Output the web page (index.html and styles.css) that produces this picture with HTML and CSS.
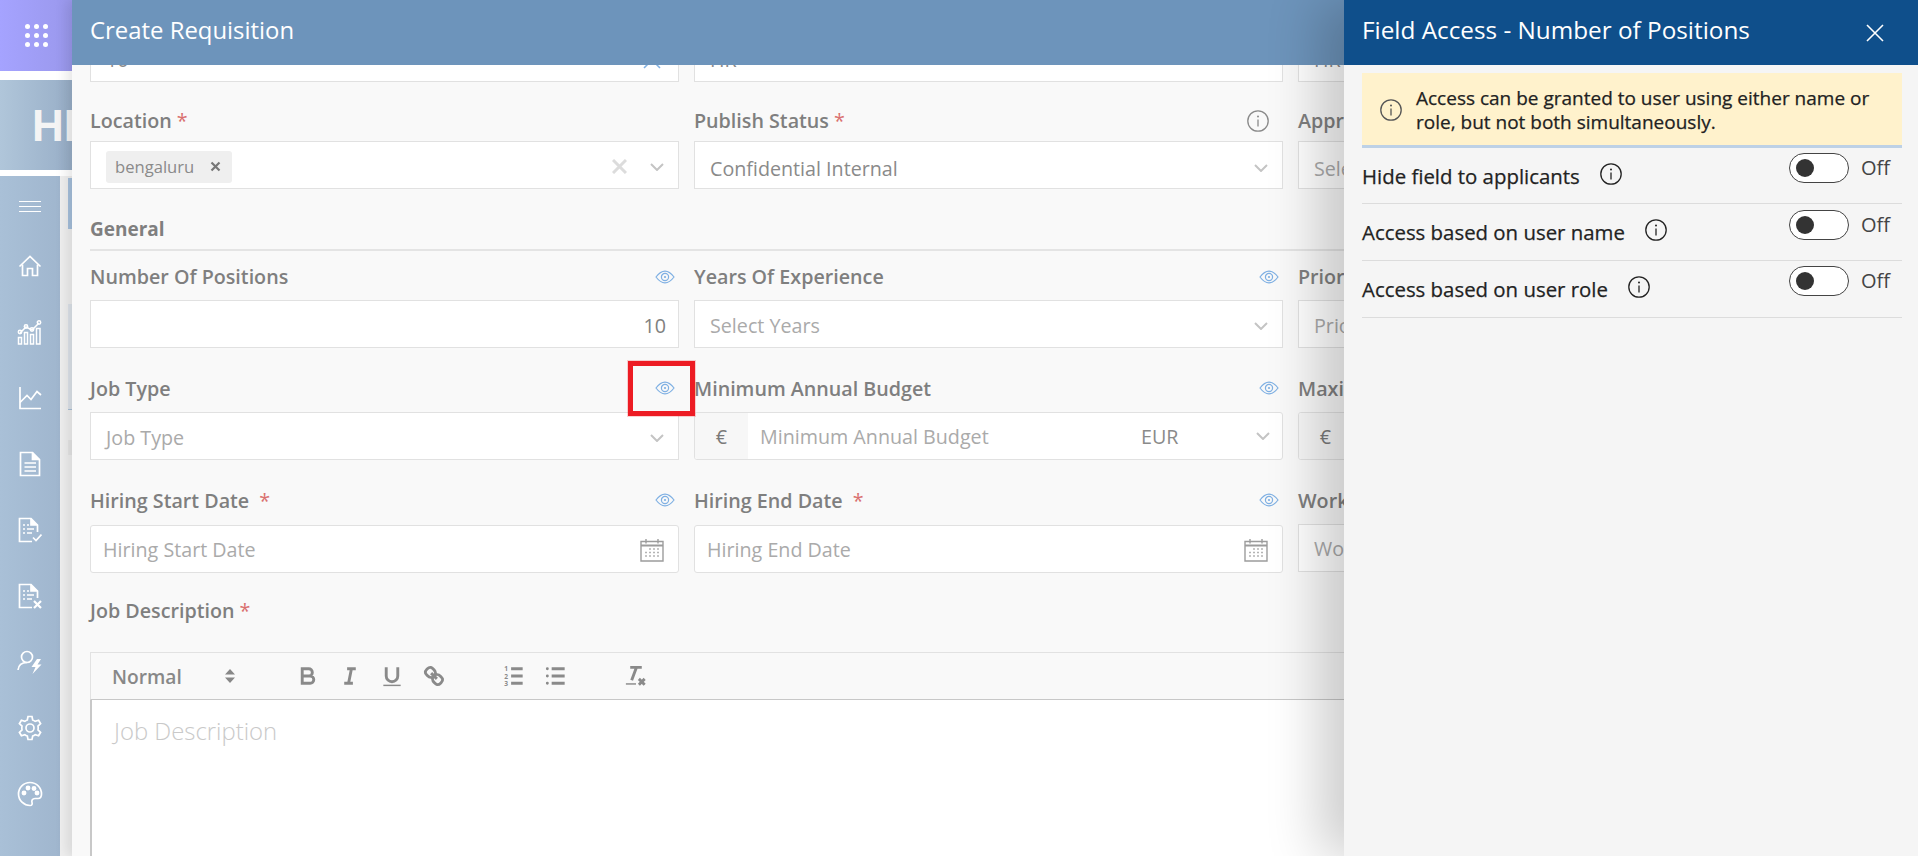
FILE: index.html
```html
<!DOCTYPE html>
<html lang="en">
<head>
<meta charset="utf-8">
<title>Create Requisition</title>
<link rel="stylesheet" href="styles.css">
</head>
<body>
<svg class="defs" width="0" height="0" aria-hidden="true">
  <symbol id="i-eye" viewBox="0 0 20 14"><path d="M1 7C4 3 7 1.2 10 1.2S16 3 19 7C16 11 13 12.8 10 12.8S4 11 1 7Z" fill="none" stroke="currentColor" stroke-width="1.2"/><circle cx="10" cy="7" r="3.6" fill="none" stroke="currentColor" stroke-width="1.2"/><circle cx="10" cy="7" r="1.1" fill="currentColor"/></symbol>
  <symbol id="i-chev" viewBox="0 0 14 8"><path d="M1 1L7 7L13 1" fill="none" stroke="currentColor" stroke-width="2"/></symbol>
  <symbol id="i-info" viewBox="0 0 22 22"><circle cx="11" cy="11" r="10.2" fill="none" stroke="currentColor" stroke-width="1.3"/><circle cx="11" cy="6.6" r="1" fill="currentColor"/><path d="M11 9.5V16.5" stroke="currentColor" stroke-width="1.3"/></symbol>
  <symbol id="i-cal" viewBox="0 0 24 24"><path d="M1 3.5H23V23H1Z" fill="none" stroke="currentColor" stroke-width="1.4"/><path d="M1 7.5H23" stroke="currentColor" stroke-width="2"/><path d="M6 1V5.5M18 1V5.5" stroke="currentColor" stroke-width="1.4"/><path d="M9 11H11M13 11H15M17 11H19M5 14.5H7M9 14.5H11M13 14.5H15M17 14.5H19M5 18H7M9 18H11M13 18H15M17 18H19" stroke="currentColor" stroke-width="1.6" opacity=".75"/></symbol>
</svg>

<div class="app">
  <aside class="rail">
    <div class="launcher"><div class="dots"><i></i><i></i><i></i><i></i><i></i><i></i><i></i><i></i><i></i></div></div>
    <div class="logo">HI</div>
    <div class="rail-body">
      <nav class="side-nav">
        <div class="nav-item nav-burger"><svg width="24" height="14" viewBox="0 0 24 14"><path d="M1 1.5H23M1 6.5H23M1 11.5H23" stroke="#fff" stroke-width="1"/></svg></div>
        <div class="nav-item"><svg width="24" height="24" viewBox="0 0 24 24" fill="none" stroke="#fff" stroke-width="1.7"><path d="M1.5 12.5L12 2.5L22.5 12.5"/><path d="M4.5 10.5V21.5H9.5V14.5H14.5V21.5H19.5V10.5"/></svg></div>
        <div class="nav-item"><svg width="26" height="26" viewBox="0 0 26 26" fill="none" stroke="#fff" stroke-width="1.5"><path d="M3 14L9 8L15 11L22 4"/><circle cx="3" cy="13" r="1.7"/><circle cx="9" cy="7.5" r="1.7"/><circle cx="15" cy="10.5" r="1.7"/><circle cx="22" cy="3.5" r="1.7"/><path d="M1.5 18.5H4.5V25H1.5ZM7.5 13.5H10.5V25H7.5ZM13.5 15.5H16.5V25H13.5ZM19.5 9.5H23V25H19.5Z"/></svg></div>
        <div class="nav-item"><svg width="24" height="24" viewBox="0 0 24 24" fill="none" stroke="#fff" stroke-width="1.7"><path d="M2 1V22.5H23"/><path d="M2 16.5L9 9.5L13 13.5L19 5.5L23 9"/></svg></div>
        <div class="nav-item"><svg width="22" height="26" viewBox="0 0 22 26" fill="none" stroke="#fff" stroke-width="1.7"><path d="M1.5 1.5H13.5L20.5 8.5V24.5H1.5Z"/><path d="M13.5 1.5V8.5H20.5" fill="#fff"/><path d="M5.5 12H17M5.5 16H17M5.5 20H17"/></svg></div>
        <div class="nav-item"><svg width="24" height="26" viewBox="0 0 24 26" fill="none" stroke="#fff" stroke-width="1.7"><path d="M14 24.5H1.5V1.5H13L19.5 8V15"/><path d="M13 1.5V8H19.5" fill="#fff"/><path d="M5 8H7M9 8H11M5 12H7M9 12H16M5 16H7M9 16H14"/><path d="M15 20.5L18 23.5L23.5 17.5"/></svg></div>
        <div class="nav-item"><svg width="24" height="26" viewBox="0 0 24 26" fill="none" stroke="#fff" stroke-width="1.7"><path d="M14 24.5H1.5V1.5H13L19.5 8V15"/><path d="M13 1.5V8H19.5" fill="#fff"/><path d="M5 8H7M9 8H11M5 12H7M9 12H16M5 16H7M9 16H14"/><path d="M16 18L23 25M23 18L16 25" stroke-width="2.2"/></svg></div>
        <div class="nav-item"><svg width="26" height="24" viewBox="0 0 26 24" fill="none" stroke="#fff" stroke-width="1.7"><circle cx="10" cy="7" r="5.5"/><path d="M1 20C1.5 15 5 12.5 10 12.5"/><path d="M20 9L14.5 17H18.5L15.5 24L24.5 14.5H20.5L24 9Z" fill="#fff" stroke="none"/></svg></div>
        <div class="nav-item"><svg width="26" height="26" viewBox="0 0 26 26" fill="none" stroke="#fff" stroke-width="1.7"><circle cx="13" cy="13" r="4"/><path d="M11 1.5H15L15.7 5A8.5 8.5 0 0 1 18.2 6.4L21.6 5.3L23.6 8.7L21 11.1A8.5 8.5 0 0 1 21 14.9L23.6 17.3L21.6 20.7L18.2 19.6A8.5 8.5 0 0 1 15.7 21L15 24.5H11L10.3 21A8.5 8.5 0 0 1 7.8 19.6L4.4 20.7L2.4 17.3L5 14.9A8.5 8.5 0 0 1 5 11.1L2.4 8.7L4.4 5.3L7.8 6.4A8.5 8.5 0 0 1 10.3 5Z"/></svg></div>
        <div class="nav-item"><svg width="26" height="26" viewBox="0 0 26 26" fill="none" stroke="#fff" stroke-width="1.7"><path d="M13 1.5C6.5 1.5 1.5 6.5 1.5 13C1.5 19.5 7 24.5 13 24.5C15 24.5 15.5 23 15 21.5C14.3 19.3 15.5 17.5 18 17.5H21C23.5 17.5 24.5 15.5 24.5 13C24.5 6.5 19.5 1.5 13 1.5Z"/><circle cx="7" cy="12" r="1.6" fill="#fff"/><circle cx="11" cy="7" r="1.6" fill="#fff"/><circle cx="17" cy="7.5" r="1.6" fill="#fff"/><circle cx="20" cy="12" r="1.6" fill="#fff"/></svg></div>
      </nav>
      <div class="rail-gutter">
        <span class="stub stub-active"></span>
        <span class="stub stub-pale"></span>
        <span class="stub stub-gray"></span>
      </div>
    </div>
  </aside>

  <section class="drawer">
    <header class="drawer-head">Create Requisition</header>
    <div class="drawer-body">
      <div class="form-row row-clipped">
        <div class="input input-value">10<svg class="clear-blue" width="18" height="18" viewBox="0 0 18 18"><path d="M1 1L17 17M17 1L1 17" stroke="#7fb0e3" stroke-width="1.6"/></svg></div>
        <div class="input input-value">HR</div>
        <div class="input input-value">HR</div>
      </div>

      <div class="form-row row-location">
        <div class="field">
          <div class="field-label"><span>Location <em class="req">*</em></span></div>
          <div class="input">
            <span class="tag">bengaluru<svg width="11" height="11" viewBox="0 0 11 11"><path d="M1.5 1.5L9.5 9.5M9.5 1.5L1.5 9.5" stroke="#777" stroke-width="2.2"/></svg></span>
            <svg class="clear-x" width="15" height="15" viewBox="0 0 15 15"><path d="M1 1L14 14M14 1L1 14" stroke="#dcdcdc" stroke-width="3"/></svg>
            <svg class="chev chev-near" width="14" height="8"><use href="#i-chev"/></svg>
          </div>
        </div>
        <div class="field">
          <div class="field-label"><span>Publish Status <em class="req">*</em></span><svg class="status-info" width="22" height="22"><use href="#i-info"/></svg></div>
          <div class="input input-value input-low">Confidential Internal<svg class="chev" width="14" height="8"><use href="#i-chev"/></svg></div>
        </div>
        <div class="field">
          <div class="field-label"><span>Approver</span></div>
          <div class="input input-ph">Select Approver</div>
        </div>
      </div>

      <h2 class="section-title">General</h2>

      <div class="form-row row-general">
        <div class="field">
          <div class="field-label"><span>Number Of Positions</span><svg class="eye" width="20" height="14"><use href="#i-eye"/></svg></div>
          <div class="input input-number">10</div>
        </div>
        <div class="field">
          <div class="field-label"><span>Years Of Experience</span><svg class="eye" width="20" height="14"><use href="#i-eye"/></svg></div>
          <div class="input input-ph">Select Years<svg class="chev" width="14" height="8"><use href="#i-chev"/></svg></div>
        </div>
        <div class="field">
          <div class="field-label"><span>Priority</span></div>
          <div class="input input-ph">Priority</div>
        </div>
      </div>

      <div class="form-row row-job">
        <div class="field">
          <div class="field-label"><span>Job Type</span><svg class="eye" width="20" height="14"><use href="#i-eye"/></svg></div>
          <div class="input input-ph">Job Type<svg class="chev" width="14" height="8"><use href="#i-chev"/></svg></div>
        </div>
        <div class="field">
          <div class="field-label"><span>Minimum Annual Budget</span><svg class="eye" width="20" height="14"><use href="#i-eye"/></svg></div>
          <div class="input input-budget input-round">
            <span class="addon">€</span>
            <span class="budget-ph">Minimum Annual Budget</span>
            <span class="currency">EUR<svg class="chev" width="14" height="8"><use href="#i-chev"/></svg></span>
          </div>
        </div>
        <div class="field">
          <div class="field-label"><span>Maximum Annual Budget</span></div>
          <div class="input input-budget input-round"><span class="addon">€</span></div>
        </div>
      </div>

      <div class="form-row row-dates">
        <div class="field">
          <div class="field-label"><span>Hiring Start Date <em class="req req-far">*</em></span><svg class="eye" width="20" height="14"><use href="#i-eye"/></svg></div>
          <div class="input input-ph input-date input-round">Hiring Start Date<svg class="cal" width="24" height="24"><use href="#i-cal"/></svg></div>
        </div>
        <div class="field">
          <div class="field-label"><span>Hiring End Date <em class="req req-far">*</em></span><svg class="eye" width="20" height="14"><use href="#i-eye"/></svg></div>
          <div class="input input-ph input-date input-round">Hiring End Date<svg class="cal" width="24" height="24"><use href="#i-cal"/></svg></div>
        </div>
        <div class="field">
          <div class="field-label"><span>Work Location</span></div>
          <div class="input input-ph input-high">Work Location</div>
        </div>
      </div>

      <div class="editor-block">
        <div class="field-label editor-label"><span>Job Description <em class="req">*</em></span></div>
        <div class="toolbar">
          <div class="picker">Normal<svg width="12" height="16" viewBox="0 0 12 16"><path d="M6 1L11 6.5H1ZM6 15L1 9.5H11Z" fill="#888"/></svg></div>
          <div class="tool-group">
            <svg class="tool" width="26" height="26" viewBox="0 0 18 18"><path d="M5 4H9.5A2.5 2.5 0 0 1 12 6.5A2.5 2.5 0 0 1 9.5 9H5ZM5 9H10.5A2.5 2.5 0 0 1 13 11.5A2.5 2.5 0 0 1 10.5 14H5Z"/></svg>
            <svg class="tool" width="26" height="26" viewBox="0 0 18 18"><path d="M7 4H13M5 14H11M8 14L10 4"/></svg>
            <svg class="tool" width="26" height="26" viewBox="0 0 18 18"><path d="M5 3V9A4 4 0 0 0 13 9V3"/><path d="M3 15.5H15" stroke-width="1"/></svg>
            <svg class="tool" width="26" height="26" viewBox="0 0 18 18"><path d="M7 7L11 11"/><path d="M8.9 4.577A3.476 3.476 0 0 1 9.26 9.256A3.476 3.476 0 0 1 4.577 8.9C3.185 7.5 2.035 6.4 4.217 4.217S7.5 3.185 8.9 4.577Z"/><path d="M13.423 9.1A3.476 3.476 0 0 0 8.744 8.74A3.476 3.476 0 0 0 9.104 13.419C10.496 14.811 11.604 15.961 13.783 13.779S14.815 10.5 13.423 9.1Z"/></svg>
          </div>
          <div class="tool-group">
            <svg class="tool" width="26" height="26" viewBox="0 0 18 18"><path d="M7 4H15M7 9H15M7 14H15"/><text x="2.2" y="5.8" class="tool-num">1</text><text x="2.2" y="10.8" class="tool-num">2</text><text x="2.2" y="15.8" class="tool-num">3</text></svg>
            <svg class="tool" width="26" height="26" viewBox="0 0 18 18"><path d="M6 4H15M6 9H15M6 14H15"/><path d="M3 4H3.01M3 9H3.01M3 14H3.01" stroke-linecap="round"/></svg>
          </div>
          <div class="tool-group">
            <svg class="tool" width="26" height="26" viewBox="0 0 18 18"><path d="M5 3H13M6 12L9.35 3"/><path d="M11 11L15 15M15 11L11 15"/><path d="M2 14.5H9" stroke-width="1"/></svg>
          </div>
        </div>
        <div class="editor-area">Job Description</div>
      </div>
    </div>
  </section>

  <aside class="panel">
    <header class="panel-head">
      <span>Field Access - Number of Positions</span>
      <svg width="18" height="18" viewBox="0 0 18 18"><path d="M1 1L17 17M17 1L1 17" stroke="#fff" stroke-width="1.6"/></svg>
    </header>
    <div class="panel-body">
      <div class="notice">
        <svg width="22" height="22"><use href="#i-info"/></svg>
        <p>Access can be granted to user using either name or role, but not both simultaneously.</p>
      </div>
      <div class="access-row">
        <span>Hide field to applicants</span><svg class="row-info" width="22" height="22"><use href="#i-info"/></svg>
        <div class="switch-wrap"><span class="switch"><i></i></span><span>Off</span></div>
      </div>
      <div class="access-row access-row-mid">
        <span>Access based on user name</span><svg class="row-info" width="22" height="22"><use href="#i-info"/></svg>
        <div class="switch-wrap"><span class="switch"><i></i></span><span>Off</span></div>
      </div>
      <div class="access-row">
        <span>Access based on user role</span><svg class="row-info" width="22" height="22"><use href="#i-info"/></svg>
        <div class="switch-wrap"><span class="switch"><i></i></span><span>Off</span></div>
      </div>
    </div>
  </aside>

  <div class="callout"></div>
</div>
</body>
</html>
```
FILE: styles.css
```css
* { box-sizing: border-box; }
html, body { margin: 0; height: 100%; overflow: hidden; background: #fff; }
body { font-family: "Open Sans", "Noto Sans", sans-serif; }
.defs { position: absolute; }

.app { position: relative; display: flex; width: 1918px; height: 856px; overflow: hidden; }

/* left rail */
.rail { flex: 0 0 72px; display: flex; flex-direction: column; overflow: hidden; }
.launcher { height: 71px; display: flex; align-items: center; justify-content: center; background: linear-gradient(90deg, #a5a3ff, #9a98ec); }
.dots { display: grid; grid-template-columns: repeat(3, 5px); gap: 4px; }
.dots i { width: 5px; height: 5px; border-radius: 50%; background: #fff; }
.logo { margin-top: 9px; height: 90px; padding-left: 32px; overflow: hidden; background: linear-gradient(90deg, #b0c6da, #98aec7); color: #f4f4f4; font-family: "Liberation Sans", sans-serif; font-size: 44px; font-weight: 700; line-height: 92px; white-space: nowrap; }
.rail-body { flex: 1; margin-top: 6px; display: flex; min-height: 0; }
.side-nav { flex: 0 0 60px; background: linear-gradient(90deg, #a9c0d7, #a0b6ce); display: flex; flex-direction: column; align-items: center; }
.nav-item { height: 66px; flex: none; display: flex; align-items: center; justify-content: center; }
.nav-burger { height: 57px; padding-top: 5px; }
.rail-gutter { flex: 1; background: #efefef; padding: 2px 0 0 8px; display: flex; flex-direction: column; }
.stub { display: block; }
.stub-active { height: 51px; background: #a6c0dc; }
.stub-pale { margin-top: 75px; height: 106px; background: #dde3ea; border-bottom: 1px solid #a8bfd6; }
.stub-gray { margin-top: 30px; height: 15px; background: #e6e6e6; }

/* main drawer */
.drawer { flex: 1; min-width: 0; display: flex; flex-direction: column; background: #f9f9f9; box-shadow: -5px 0 12px rgba(0, 0, 0, .1); position: relative; overflow: hidden; }
.drawer-head { position: relative; z-index: 2; flex: 0 0 65px; padding-left: 18px; background: #6d94bb; color: #fff; font-size: 23.9px; line-height: 60px; }
.drawer-body { flex: 1; min-height: 0; margin-top: -31px; display: flex; flex-direction: column; }

.form-row { display: grid; grid-template-columns: repeat(3, 589px); column-gap: 15px; padding-left: 18px; flex: none; }
.row-location { margin-top: 25px; }
.row-general { margin-top: 12px; }
.row-job { margin-top: 27px; }
.row-dates { margin-top: 27px; }

.field-label { display: flex; align-items: center; justify-content: space-between; height: 28px; padding-right: 4px; color: #7f7f7f; font-size: 19.7px; font-weight: 600; line-height: 28px; white-space: nowrap; }
.row-location .field-label { margin-bottom: 6px; }
.row-general .field-label, .row-job .field-label { margin-bottom: 9px; }
.row-dates .field-label { margin-bottom: 10px; }
.row-job .eye { margin-top: -2px; }
.row-dates .eye { margin-top: -2px; }
.req { color: #d9706f; font-style: normal; font-weight: 400; }
.req-far { margin-left: 5px; }
.status-info { color: #8a8a8a; margin-right: 10px; }
.eye { color: #7fb0e3; }

.input { display: flex; align-items: center; height: 48px; padding: 3px 14px 0 15px; background: #fff; border: 1px solid #e1e1e1; font-size: 19.7px; white-space: nowrap; overflow: hidden; }
.row-location .input-value, .row-location .input-ph { padding-top: 6px; }
.row-location .input:first-child { padding-top: 0; }
.row-dates .input { padding-top: 1px; }
.input-value { color: #8a8a8a; }
.input-ph { color: #aaa; }
.input-number { justify-content: flex-end; color: #808080; padding-right: 12px; }
.input-round { border-radius: 3px; }
.input-low { margin-top: 2px; }
.input-high { margin-top: -1px; }
.input-date { padding-left: 12px; }
.chev { margin-left: auto; color: #c4c4c4; flex: none; }
.cal { margin-left: auto; color: #9c9c9c; flex: none; }
.clear-blue { margin-left: auto; margin-right: 3px; }

.tag { display: flex; align-items: center; gap: 16px; height: 32px; padding: 0 11px 0 9px; border-radius: 3px; background: #efefef; color: #8a8a8a; font-size: 16.6px; }
.clear-x { margin-left: auto; }
.chev-near { margin-left: 23px; }

.input-budget { padding: 0 12px 0 0; }
.addon { flex: 0 0 53px; align-self: stretch; display: flex; align-items: center; justify-content: center; background: #f7f7f7; color: #7a7a7a; font-size: 19.7px; }
.budget-ph { flex: 1; padding-left: 12px; color: #aaa; }
.currency { flex: 0 0 129px; display: flex; align-items: center; color: #8a8a8a; font-size: 19.7px; }

.section-title { flex: none; margin: 26px 0 0 18px; padding-bottom: 6px; border-bottom: 2px solid #e4e4e4; color: #7f7f7f; font-size: 19px; font-weight: 700; line-height: 28px; }

/* editor */
.editor-block { flex: 1; min-height: 0; margin: 24px 0 0 18px; display: flex; flex-direction: column; }
.editor-label { margin-bottom: 27px; }
.toolbar { flex: 0 0 48px; display: flex; align-items: center; padding-left: 21px; background: #f9f9f9; border: 1px solid #e2e2e2; border-bottom-color: #c8c8c8; border-right: 0; }
.picker { flex: 0 0 124px; display: flex; align-items: center; justify-content: space-between; margin-right: 51px; color: #888; font-size: 19.2px; font-weight: 600; }
.tool-group { display: flex; margin-right: 38px; }
.tool { width: 42px; height: 26px; fill: none; stroke: #8a8a8a; stroke-width: 2; }
.tool-num { font-size: 4.6px; font-weight: 700; fill: #8a8a8a; stroke: none; }
.editor-area { flex: 1; padding: 15px 0 0 22px; background: #fff; border-left: 2px solid #c8c8c8; color: #c9c9c9; font-size: 23.9px; font-weight: 300; line-height: 32px; }

/* right panel */
.panel { position: absolute; z-index: 3; top: 0; right: 0; bottom: 0; width: 574px; background: #f5f5f5; box-shadow: -24px 0 50px rgba(0, 0, 0, .2); }
.panel-head { display: flex; align-items: center; justify-content: space-between; height: 65px; padding: 0 34px 0 18px; background: #0f4f8b; color: #fff; font-size: 24.3px; }
.panel-head span { margin-top: -6px; }
.panel-body { padding: 8px 16px 0 18px; color: #222; }
.notice { display: flex; align-items: center; gap: 14px; padding: 13px 18px 11px; background: #fff2cc; border-bottom: 3px solid #bdd1e6; }
.notice svg { flex: none; color: #555; }
.notice p { margin: 0; font-size: 19px; font-weight: 500; line-height: 24px; -webkit-text-stroke: .25px #222; }
.access-row { display: flex; align-items: center; height: 57px; border-bottom: 1px solid #dcdcdc; font-size: 20.4px; font-weight: 500; white-space: nowrap; }
.access-row > span { -webkit-text-stroke: .25px #222; }
.notice + .access-row { height: 56px; }
.row-info { margin: 0 0 4px 20px; flex: none; }
.switch-wrap { align-self: flex-start; margin: 5px 12px 0 auto; display: flex; align-items: center; gap: 12px; color: #444; font-size: 20px; font-weight: 400; line-height: 30px; }
.access-row-mid .switch-wrap { margin-top: 6px; }
.switch { display: flex; align-items: center; width: 60px; height: 30px; padding-left: 6px; border: 1.5px solid #444; border-radius: 15px; background: #fff; }
.switch i { display: block; width: 18px; height: 18px; border-radius: 50%; background: #333; }

.callout { position: absolute; z-index: 4; left: 628px; top: 361px; width: 67px; height: 55px; border: 5px solid #ed1c24; outline: 1px solid rgba(237, 28, 36, .2); }
```
